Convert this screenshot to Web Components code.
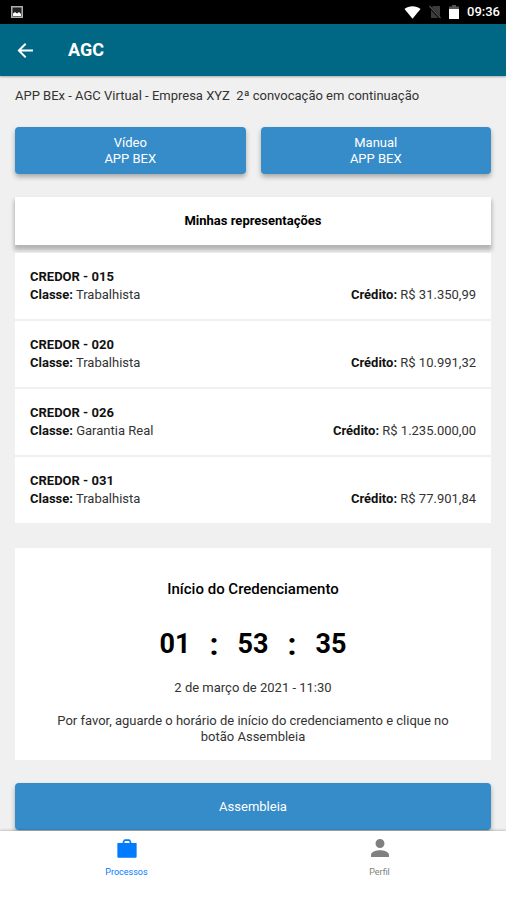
<!DOCTYPE html>
<html lang="pt-BR">
<head>
<meta charset="utf-8">
<meta name="viewport" content="width=device-width, initial-scale=1">
<title>AGC</title>
<style>
  body {
    margin: 0;
    background: #f0f0f0;
    color: #333;
    font: 13px/16px Roboto, "Liberation Sans", sans-serif;
  }
</style>
</head>
<body>
<agc-screen>
  <status-bar slot="top" time="09:36"></status-bar>
  <app-header slot="top">AGC</app-header>

  <page-title>APP BEx - AGC Virtual - Empresa XYZ&nbsp; 2ª convocação em continuação</page-title>
  <button-row>
    <action-button>Vídeo<br>APP BEX</action-button>
    <action-button>Manual<br>APP BEX</action-button>
  </button-row>
  <credor-list heading="Minhas representações">
    <credor-item name="CREDOR - 015" classe="Trabalhista" credito="R$ 31.350,99"></credor-item>
    <credor-item name="CREDOR - 020" classe="Trabalhista" credito="R$ 10.991,32"></credor-item>
    <credor-item name="CREDOR - 026" classe="Garantia Real" credito="R$ 1.235.000,00"></credor-item>
    <credor-item name="CREDOR - 031" classe="Trabalhista" credito="R$ 77.901,84"></credor-item>
  </credor-list>
  <countdown-card heading="Início do Credenciamento" time="01:53:35" date="2 de março de 2021 - 11:30">
    Por favor, aguarde o horário de início do credenciamento e clique no botão Assembleia
  </countdown-card>
  <action-button>Assembleia</action-button>

  <tab-bar slot="bottom">
    <tab-item icon="work" active>Processos</tab-item>
    <tab-item icon="person">Perfil</tab-item>
  </tab-bar>
</agc-screen>

<script>
/**
 * Page frame: bars on top, content, tabs at the bottom
 */
class AgcScreen extends HTMLElement {
  constructor() {
    super();
    this.attachShadow({ mode: "open" });
    this.shadowRoot.innerHTML = `
      <style>
        :host {
          display: flex;
          flex-direction: column;
          min-height: 100vh;
        }

        main {
          flex: 1;
          display: flex;
          flex-direction: column;
          gap: 23px;
          padding: 12px 15px 1px;
        }
      </style>
      <slot name="top"></slot>
      <main><slot></slot></main>
      <slot name="bottom"></slot>
    `;
  }
}

/**
 * Android status bar
 */
class StatusBar extends HTMLElement {
  constructor() {
    super();
    this.attachShadow({ mode: "open" });
    this.shadowRoot.innerHTML = `
      <style>
        :host {
          display: flex;
          align-items: center;
          gap: 8px;
          height: 24px;
          padding: 0 6px 0 11px;
          background: #000;
          color: #fff;
          font-size: 13px;
          font-weight: 500;
        }

        svg {
          display: block;
        }

        .picture {
          margin-right: auto;
        }
      </style>
      <svg class="picture" width="12" height="12" viewBox="0 0 12 12">
        <rect x="0.75" y="0.75" width="10.5" height="10.5" fill="#222" stroke="#b0b0b0" stroke-width="1.5"/>
        <path d="M2 10V7.500L4 6l2 1.500L8 6l2 2v2z" fill="#fff"/>
      </svg>
      <svg width="17" height="13" viewBox="0 0 17 13">
        <path d="M0.500 3C5 -0.800 12 -0.800 16.500 3L8.500 12.800z" fill="#fff"/>
      </svg>
      <svg width="12" height="14" viewBox="0 0 12 14">
        <path d="M4 1h7v12H2V4z" fill="#3c3c3c"/>
        <path d="M0.500 1.500l11 12" stroke="#000" stroke-width="2.500"/>
        <path d="M0.500 1l11 12" stroke="#555" stroke-width="1.200"/>
      </svg>
      <svg width="10" height="14" viewBox="0 0 10 14">
        <path d="M3 0h4v1.500h3V5H0V1.500h3z" fill="#555"/>
        <path d="M0 4h10v10H0z" fill="#fff"/>
      </svg>
      <span></span>
    `;
  }

  connectedCallback() {
    this.shadowRoot.querySelector("span").textContent = this.getAttribute("time");
  }
}

/**
 * Header with back button and screen title
 */
class AppHeader extends HTMLElement {
  constructor() {
    super();
    this.attachShadow({ mode: "open" });
    this.shadowRoot.innerHTML = `
      <style>
        :host {
          display: flex;
          align-items: center;
          gap: 32px;
          height: 52px;
          padding: 0 15px;
          background: #006884;
          color: #fff;
          box-shadow: 0 1px 2px rgba(0, 0, 0, 0.3);
        }

        button {
          display: block;
          padding: 0;
          border: 0;
          background: none;
          color: inherit;
          cursor: pointer;
        }

        svg {
          display: block;
        }

        h1 {
          margin: 0;
          font-size: 18px;
          line-height: 24px;
          font-weight: 700;
        }
      </style>
      <button type="button" aria-label="Voltar">
        <svg width="21" height="21" viewBox="0 0 24 24" fill="currentColor">
          <path d="M20.500 10.800v2.400H7.200l5.800 5.800-1.600 1.600L2.800 12l8.600-8.600L13 5l-5.800 5.800z"/>
        </svg>
      </button>
      <h1><slot></slot></h1>
    `;
  }
}

class PageTitle extends HTMLElement {
  constructor() {
    super();
    this.attachShadow({ mode: "open" });
    this.shadowRoot.innerHTML = `
      <style>
        :host {
          display: block;
        }
      </style>
      <slot></slot>
    `;
  }
}

class ButtonRow extends HTMLElement {
  constructor() {
    super();
    this.attachShadow({ mode: "open" });
    this.shadowRoot.innerHTML = `
      <style>
        :host {
          display: flex;
          gap: 15px;
        }

        ::slotted(*) {
          flex: 1;
        }
      </style>
      <slot></slot>
    `;
  }
}

/**
 * Blue raised button
 */
class ActionButton extends HTMLElement {
  constructor() {
    super();
    this.attachShadow({ mode: "open" });
    this.shadowRoot.innerHTML = `
      <style>
        :host {
          display: block;
        }

        button {
          display: block;
          width: 100%;
          min-height: 47px;
          padding: 0 8px;
          border: 0;
          border-radius: 4px;
          background: #358cc9;
          color: #fff;
          font: inherit;
          box-shadow: 0 3px 5px rgba(0, 0, 0, 0.3);
          cursor: pointer;
        }
      </style>
      <button type="button"><slot></slot></button>
    `;
  }
}

/**
 * Raised heading with the list of creditors below
 */
class CredorList extends HTMLElement {
  constructor() {
    super();
    this.attachShadow({ mode: "open" });
    this.shadowRoot.innerHTML = `
      <style>
        :host {
          display: flex;
          flex-direction: column;
          gap: 8px;
        }

        h2 {
          margin: 0;
          padding: 16px;
          background: #fff;
          color: #000;
          font-size: 13px;
          line-height: 16px;
          font-weight: 700;
          text-align: center;
          box-shadow: 0 4px 4px 1px rgba(0, 0, 0, 0.25);
        }

        .items {
          position: relative;
          display: flex;
          flex-direction: column;
          gap: 2px;
        }
      </style>
      <h2></h2>
      <div class="items"><slot></slot></div>
    `;
  }

  connectedCallback() {
    this.shadowRoot.querySelector("h2").textContent = this.getAttribute("heading");
  }
}

class CredorItem extends HTMLElement {
  constructor() {
    super();
    this.attachShadow({ mode: "open" });
    this.shadowRoot.innerHTML = `
      <style>
        :host {
          display: block;
          padding: 15px;
          background: #fff;
          line-height: 18px;
        }

        .line {
          display: flex;
          justify-content: space-between;
        }

        b {
          color: #111;
          font-weight: 700;
        }
      </style>
      <b class="name"></b>
      <div class="line">
        <span><b>Classe:</b> <span class="classe"></span></span>
        <span><b>Crédito:</b> <span class="credito"></span></span>
      </div>
    `;
  }

  connectedCallback() {
    // every attribute has an element with the same class
    ["name", "classe", "credito"].forEach((key) => {
      this.shadowRoot.querySelector("." + key).textContent = this.getAttribute(key);
    });
  }
}

/**
 * Card with the time left
 */
class CountdownCard extends HTMLElement {
  constructor() {
    super();
    this.attachShadow({ mode: "open" });
    this.shadowRoot.innerHTML = `
      <style>
        :host {
          display: block;
          margin-top: 2px;
          padding: 32px 32px 15px;
          background: #fff;
          text-align: center;
        }

        h2 {
          margin: 0;
          color: #000;
          font-size: 15px;
          line-height: 18px;
          font-weight: 500;
        }

        .clock {
          display: grid;
          grid-template-columns: repeat(5, 39px);
          justify-content: center;
          align-items: center;
          margin: 28px 0 18px;
          height: 36px;
          color: #000;
          font-size: 27px;
          line-height: 36px;
          font-weight: 700;
        }

        .colon {
          font-size: 32px;
        }

        p {
          margin: 0;
        }

        .date {
          margin-bottom: 17px;
        }
      </style>
      <h2></h2>
      <div class="clock" role="timer"></div>
      <p class="date"></p>
      <p><slot></slot></p>
    `;
  }

  connectedCallback() {
    this.shadowRoot.querySelector("h2").textContent = this.getAttribute("heading");
    this.shadowRoot.querySelector(".date").textContent = this.getAttribute("date");
    this._renderClock();
  }

  /**
   * @description Splits hh:mm:ss into digits and colons
   * @private
   */
  _renderClock() {
    this.shadowRoot.querySelector(".clock").innerHTML = this.getAttribute("time")
      .split(":")
      .map((part) => `<span>${part}</span>`)
      .join(`<span class="colon">:</span>`);
  }
}

class TabBar extends HTMLElement {
  constructor() {
    super();
    this.attachShadow({ mode: "open" });
    this.shadowRoot.innerHTML = `
      <style>
        :host {
          position: sticky;
          bottom: 0;
          display: block;
          background: #fff;
          box-shadow: 0 -1px 2px rgba(0, 0, 0, 0.2);
        }

        nav {
          display: flex;
          padding: 6px 0 22px;
        }

        ::slotted(*) {
          flex: 1;
        }
      </style>
      <nav><slot></slot></nav>
    `;
  }
}

const ICONS = {
  work: "M22.500 6.500h-5.500L15.800 3.600c-.3-.8-.9-1.200-1.800-1.200h-4c-.9 0-1.500.4-1.800 1.200L7 6.500H1.500V21.500c0 .6.400 1 1 1h19c.6 0 1-.4 1-1zM9 6.500l.8-2.200h4.400l.8 2.200z",
  person: "M12 12c2.700 0 4.900-2.200 4.900-4.900S14.700 2.200 12 2.200 7.100 4.400 7.100 7.100 9.300 12 12 12zm0 2.500c-3.300 0-9.800 1.600-9.800 4.900v2.400h19.600v-2.400c0-3.300-6.500-4.900-9.800-4.900z"
};

class TabItem extends HTMLElement {
  constructor() {
    super();
    this.attachShadow({ mode: "open" });
    this.shadowRoot.innerHTML = `
      <style>
        :host {
          display: block;
          color: #808080;
        }

        :host([active]) {
          color: #007aff;
        }

        a {
          display: flex;
          flex-direction: column;
          align-items: center;
          gap: 7px;
          color: inherit;
          font-size: 9px;
          line-height: 12px;
          text-decoration: none;
        }
      </style>
      <a href="#">
        <svg width="22" height="22" viewBox="0 0 24 24" fill="currentColor"><path/></svg>
        <slot></slot>
      </a>
    `;
  }

  connectedCallback() {
    this.shadowRoot.querySelector("path").setAttribute("d", ICONS[this.getAttribute("icon")]);
  }
}

customElements.define("agc-screen", AgcScreen);
customElements.define("status-bar", StatusBar);
customElements.define("app-header", AppHeader);
customElements.define("page-title", PageTitle);
customElements.define("button-row", ButtonRow);
customElements.define("action-button", ActionButton);
customElements.define("credor-list", CredorList);
customElements.define("credor-item", CredorItem);
customElements.define("countdown-card", CountdownCard);
customElements.define("tab-bar", TabBar);
customElements.define("tab-item", TabItem);
</script>
</body>
</html>
